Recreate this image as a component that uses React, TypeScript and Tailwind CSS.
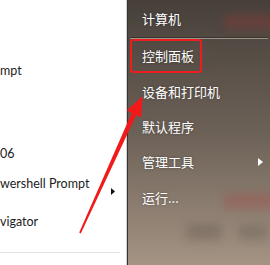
import React from "react";

const leftFont = { fontFamily: "'Lato', 'Noto Sans', sans-serif" };

function MenuRow({ label, arrow }: { label: string; arrow?: boolean }) {
  return (
    <div className="flex h-[30px] items-center justify-between pl-[14px] pr-[7px]">
      <span className="text-[13px] text-white [text-shadow:0_0_3px_rgba(0,0,0,0.35)]">{label}</span>
      {arrow ? (
        <svg width="5" height="8" viewBox="0 0 5 8">
          <path d="M0 0 L5 4 L0 8 Z" fill="#ffffff" />
        </svg>
      ) : null}
    </div>
  );
}

export default function App() {
  return (
    <div className="relative flex h-[265px] w-[270px] overflow-hidden bg-white font-['Noto_Sans_CJK_SC',sans-serif]">
      {/* left program list (clipped) */}
      <div className="flex w-[126px] flex-col bg-white pt-[61px] text-[12.5px] text-[#1c1c1c]" style={leftFont}>
        <div className="flex h-[20px] items-center">mpt</div>
        <div className="mt-[63px] flex h-[20px] items-center">06</div>
        <div className="mt-[10px] flex h-[20px] items-center justify-between pr-[11px]">
          <span>wershell Prompt</span>
          <svg width="4" height="7" viewBox="0 0 4 7" className="mt-[14px]">
            <path d="M0 0 L4 3.5 L0 7 Z" fill="#111111" />
          </svg>
        </div>
        <div className="mt-[18px] flex h-[20px] items-center">vigator</div>
        <div className="mt-[20px] h-px w-[120px] bg-[#e2e2e2]" />
      </div>

      {/* frame edge */}
      <div className="w-px bg-[#cfcfcf]" />
      <div className="w-px bg-[#3b3631]" />

      {/* right links pane */}
      <div className="relative flex flex-1 flex-col bg-gradient-to-b from-[#47403a] via-[#6c6157] to-[#a59484] pt-[4px]">
        <div className="pointer-events-none absolute left-[96px] top-[14px] h-[16px] w-[60px] rounded bg-[#8a3a36]/40 blur-[4px]" />
        <div className="pointer-events-none absolute left-[44px] top-[48px] h-[12px] w-[40px] rounded bg-[#5a524b]/40 blur-[4px]" />
        <div className="pointer-events-none absolute left-[96px] top-[193px] h-[16px] w-[60px] rounded bg-[#a0504a]/40 blur-[4px]" />
        <div className="pointer-events-none absolute left-[58px] top-[224px] h-[16px] w-[36px] rounded bg-[#6a5e55]/45 blur-[5px]" />
        <div className="pointer-events-none absolute left-[110px] top-[224px] h-[16px] w-[30px] rounded bg-[#6a5e55]/40 blur-[5px]" />

        <div className="relative">
          <MenuRow label="计算机" />
        </div>
        <div className="relative mx-[2px] mt-[3px]">
          <div className="h-px bg-[#3a3430]" />
          <div className="h-px bg-[#9c928a]" />
        </div>
        <div className="relative ml-[2px] flex h-[34px] w-[72px] items-center rounded-[3px] border-2 border-[#ee1d1d] pl-[10px]">
          <span className="text-[13px] text-white [text-shadow:0_0_3px_rgba(0,0,0,0.35)]">控制面板</span>
        </div>
        <div className="relative mt-[4px]">
          <MenuRow label="设备和打印机" />
        </div>
        <div className="relative mt-[5px]">
          <MenuRow label="默认程序" />
        </div>
        <div className="relative mt-[5px]">
          <MenuRow label="管理工具" arrow />
        </div>
        <div className="relative mt-[6px]">
          <MenuRow label="运行..." />
        </div>
      </div>

      {/* red pointer arrow */}
      <svg className="pointer-events-none absolute left-0 top-0" width="270" height="265" viewBox="0 0 270 265">
        <polygon
          points="79.2,232.6 80.8,233.4 136.3,115.1 141.3,117.4 142.6,95.9 126.7,110.6 131.7,112.9"
          fill="#f01a1a"
        />
      </svg>
    </div>
  );
}
